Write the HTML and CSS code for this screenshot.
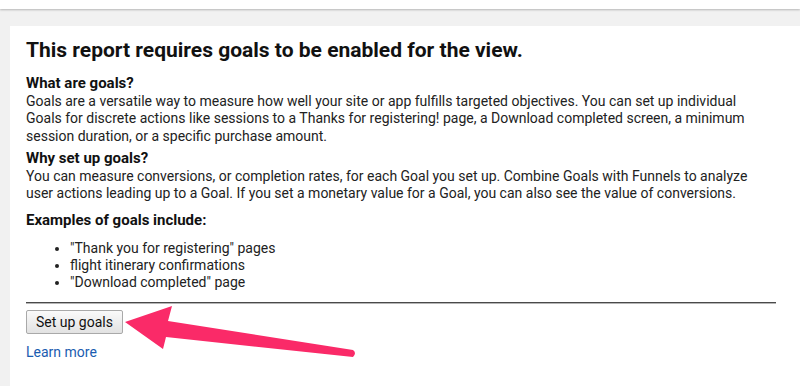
FILE: index.html
```html
<!DOCTYPE html>
<html lang="en">
<head>
    <meta charset="UTF-8">
    <meta name="viewport" content="width=device-width, initial-scale=1.0">
    <title>Goals</title>
    <link rel="stylesheet" href="styles.css">
</head>
<body>
    <div class="topbar"></div>
    <div class="card">
        <h1>This report requires goals to be enabled for the view.</h1>

        <div class="section">
            <h3>What are goals?</h3>
            <p>Goals are a versatile way to measure how well your site or app fulfills targeted objectives. You can set up individual Goals for discrete actions like sessions to a Thanks for registering! page, a Download completed screen, a minimum session duration, or a specific purchase amount.</p>
        </div>

        <div class="section">
            <h3>Why set up goals?</h3>
            <p>You can measure conversions, or completion rates, for each Goal you set up. Combine Goals with Funnels to analyze user actions leading up to a Goal. If you set a monetary value for a Goal, you can also see the value of conversions.</p>
        </div>

        <h3 class="examples-title">Examples of goals include:</h3>
        <ul class="examples">
            <li>"Thank you for registering" pages</li>
            <li>flight itinerary confirmations</li>
            <li>"Download completed" page</li>
        </ul>

        <hr class="divider">
        <button class="setup-btn">Set up goals</button>
        <a class="learn-more" href="#">Learn more</a>
    </div>

    <!-- annotation arrow -->
    <svg class="arrow" width="800" height="386" viewBox="0 0 800 386">
        <path d="M125 322 L172 306 L168 321 L353 350 Q357 353 353 357 L166 337 L163 349 Z" fill="#fa2a68"/>
    </svg>
</body>
</html>
```

FILE: styles.css
```css
body {
    margin: 0;
    background-color: #f1f1f1;
    font-family: Roboto, "Liberation Sans", Arial, sans-serif;
    color: #222;
    height: 386px;
    overflow: hidden;
    position: relative;
}
.topbar {
    height: 9px;
    background-color: #fff;
    box-shadow: 0 1px 2px rgba(0, 0, 0, 0.25);
}
.card {
    margin: 17px 0 0 10px;
    padding: 11px 24px 40px 16px;
    background-color: #fff;
    min-height: 400px;
}
h1 {
    margin: 0 0 12px;
    font-size: 21px;
    line-height: 26px;
    font-weight: bold;
    color: #111;
}
h3 {
    margin: 0;
    font-size: 15px;
    line-height: 17.5px;
    font-weight: bold;
    color: #111;
}
p {
    margin: 0;
    max-width: 730px;
    font-size: 14px;
    line-height: 17.5px;
}
.section {
    margin-bottom: 5px;
}
.examples-title {
    margin-top: 9px;
}
.examples {
    margin: 11px 0 0;
    padding-left: 44px;
    font-size: 14px;
    line-height: 17px;
}
.divider {
    margin: 11px 0 0;
    border: none;
    border-top: 1px solid #4a4a4a;
    border-bottom: 1px solid #b5b5b5;
    height: 0;
}
.setup-btn {
    display: block;
    margin-top: 6px;
    height: 24px;
    padding: 0 9px;
    font-family: Roboto, "Liberation Sans", Arial, sans-serif;
    font-size: 14px;
    color: #111;
    background: linear-gradient(#fafafa, #e2e2e2);
    border: 1px solid #a9a9a9;
    border-radius: 2px;
}
.learn-more {
    display: inline-block;
    margin-top: 10px;
    font-size: 14px;
    line-height: 17px;
    color: #1a5cb0;
    text-decoration: none;
}
.arrow {
    position: absolute;
    left: 0;
    top: 0;
    pointer-events: none;
}
```
